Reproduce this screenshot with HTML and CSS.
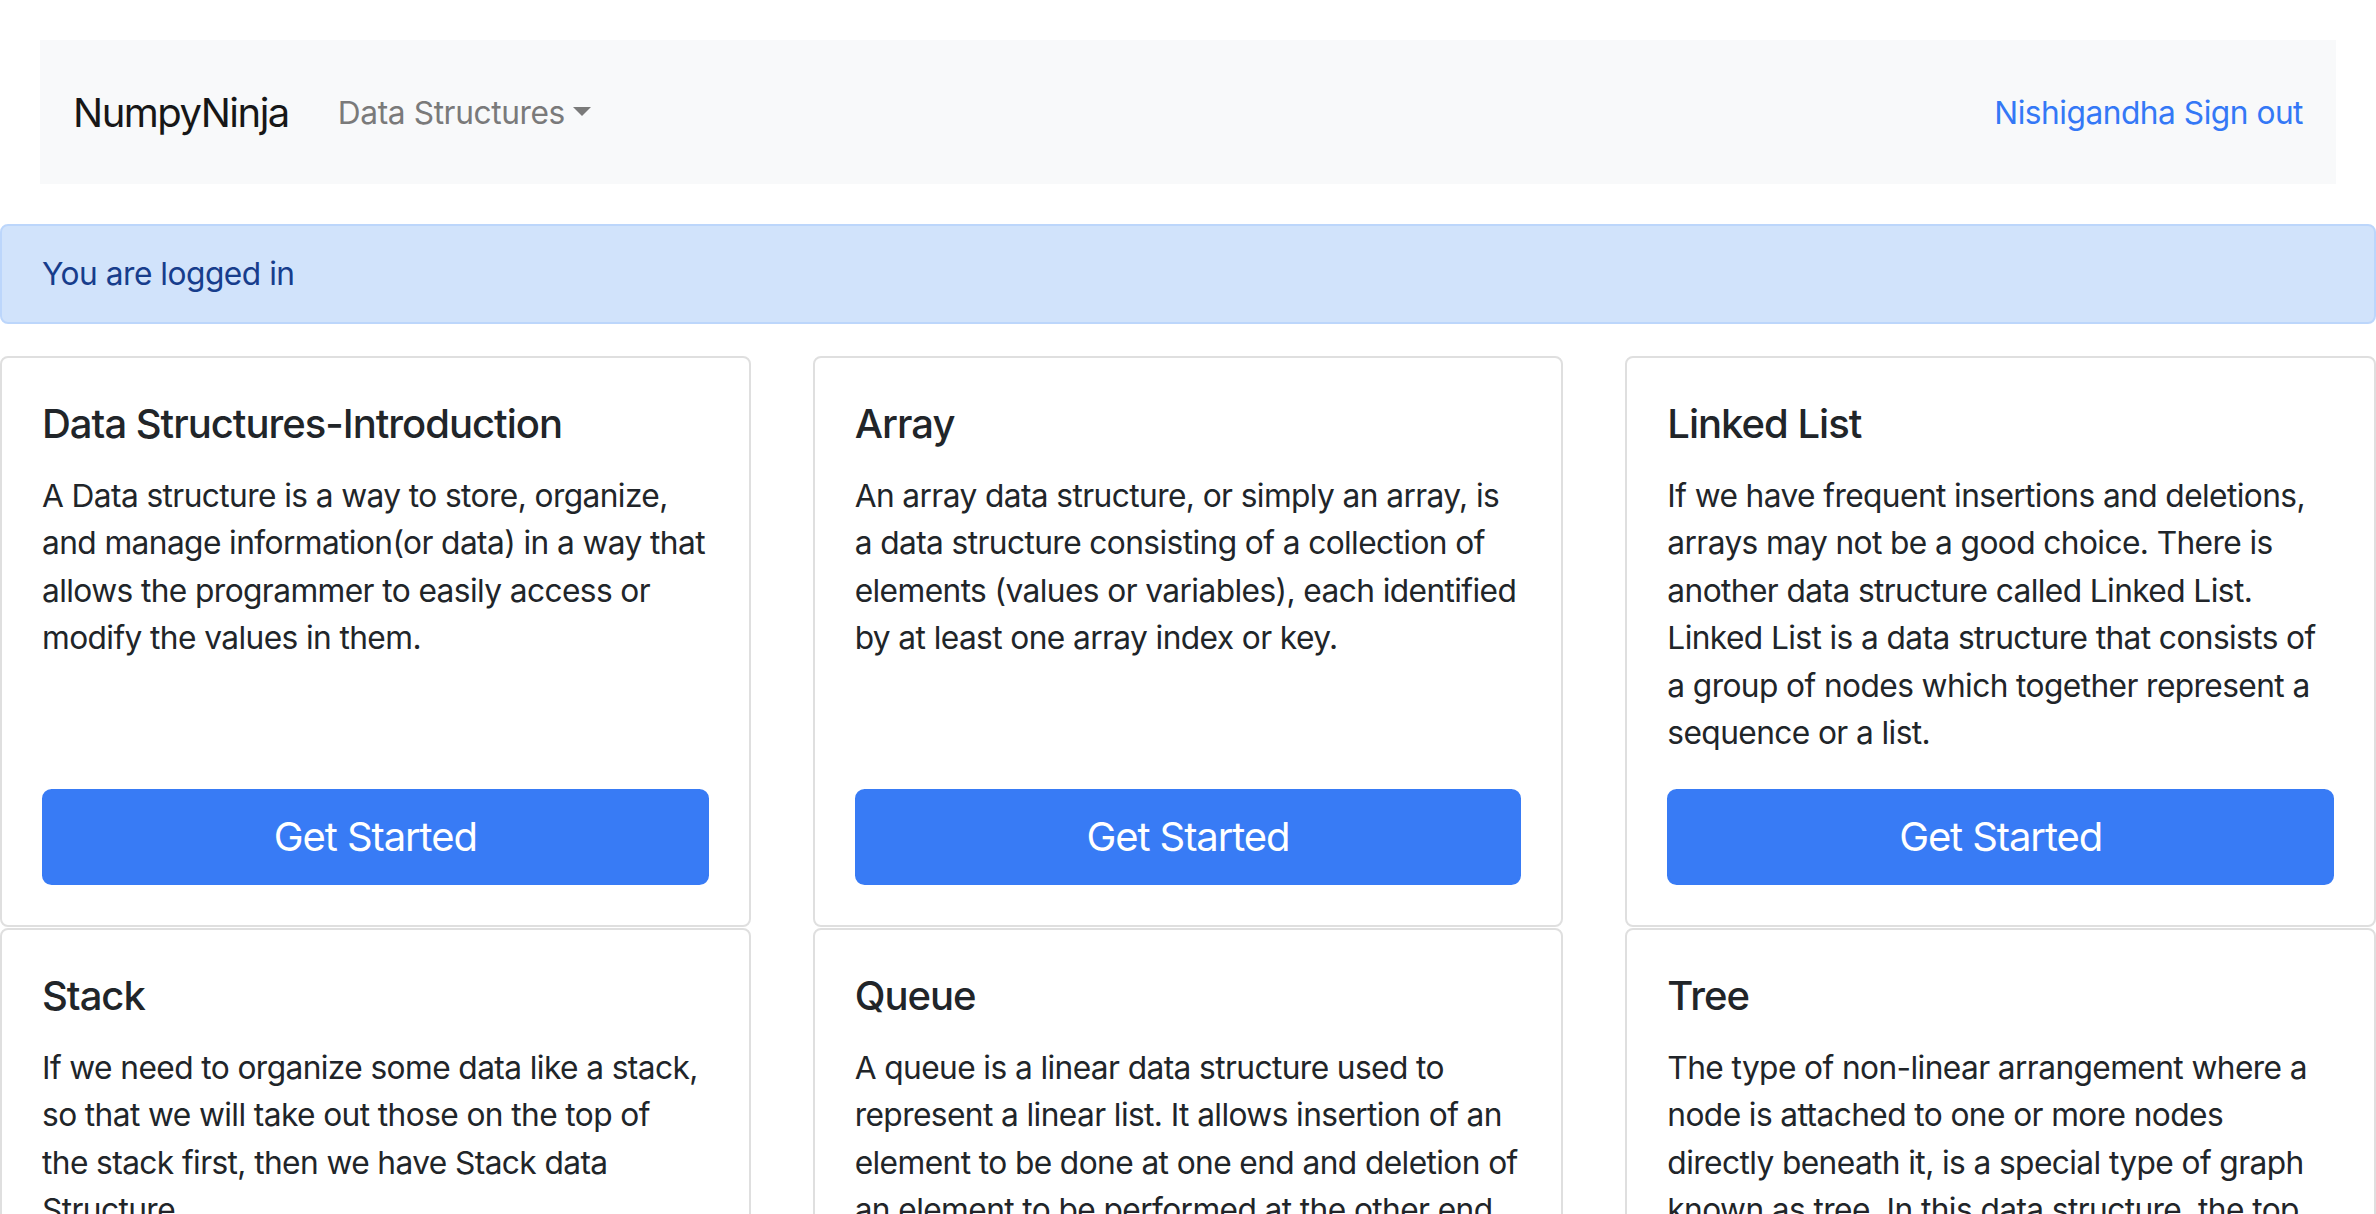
FILE: index.html
```html
<!DOCTYPE html>
<html lang="en">
<head>
<meta charset="utf-8">
<title>NumpyNinja</title>
<link rel="stylesheet" href="styles.css">
</head>
<body>
<nav class="navbar">
  <a class="brand" href="#">NumpyNinja</a>
  <div class="nav-menu">
    <a class="nav-link dropdown-toggle" href="#">Data Structures</a>
  </div>
  <div class="nav-right">
    <a class="nav-user" href="#">Nishigandha</a> <a class="nav-user" href="#">Sign out</a>
  </div>
</nav>

<div class="alert">You are logged in</div>

<div class="cards">
  <div class="card">
    <h5 class="card-title">Data Structures-Introduction</h5>
    <p class="card-text">A Data structure is a way to store, organize, and manage information(or data) in a way that allows the programmer to easily access or modify the values in them.</p>
    <a class="btn" href="#">Get Started</a>
  </div>
  <div class="card">
    <h5 class="card-title">Array</h5>
    <p class="card-text">An array data structure, or simply an array, is a data structure consisting of a collection of elements (values or variables), each identified by at least one array index or key.</p>
    <a class="btn" href="#">Get Started</a>
  </div>
  <div class="card">
    <h5 class="card-title">Linked List</h5>
    <p class="card-text">If we have frequent insertions and deletions, arrays may not be a good choice. There is another data structure called Linked List. Linked List is a data structure that consists of a group of nodes which together represent a sequence or a list.</p>
    <a class="btn" href="#">Get Started</a>
  </div>
  <div class="card">
    <h5 class="card-title">Stack</h5>
    <p class="card-text">If we need to organize some data like a stack, so that we will take out those on the top of the&nbsp;stack first, then we have Stack data Structure.</p>
    <a class="btn" href="#">Get Started</a>
  </div>
  <div class="card">
    <h5 class="card-title">Queue</h5>
    <p class="card-text">A queue is a linear data structure used to represent a linear list. It allows insertion of an element to be done at one end and deletion of an element to be performed at the other end.</p>
    <a class="btn" href="#">Get Started</a>
  </div>
  <div class="card">
    <h5 class="card-title">Tree</h5>
    <p class="card-text">The type of non-linear arrangement where a node is attached to one or more nodes directly beneath it, is a special type of graph known as tree. In this data structure, the top node is called the root node.</p>
    <a class="btn" href="#">Get Started</a>
  </div>
</div>
</body>
</html>
```

FILE: styles.css
```css
html, body {
  margin: 0;
  padding: 0;
}
body {
  font-family: Inter, "Liberation Sans", sans-serif;
  font-size: 31.7px;
  line-height: 1.5;
  letter-spacing: -0.6px;
  color: #212529;
  background: #ffffff;
  overflow: hidden;
}
a {
  text-decoration: none;
}

/* navbar */
.navbar {
  display: flex;
  align-items: center;
  margin: 40px 40px 0 40px;
  height: 144px;
  box-sizing: border-box;
  padding: 1px 33px 0 33px;
  background: #f8f9fa;
}
.brand {
  font-size: 40px;
  line-height: 60px;
  letter-spacing: -1.5px;
  color: #171717;
  margin-right: 33px;
}
.nav-link {
  display: inline-block;
  padding: 0 16px;
  letter-spacing: -0.4px;
  color: #7a7a7a;
}
.dropdown-toggle::after {
  content: "";
  display: inline-block;
  margin-left: 8px;
  vertical-align: 8px;
  border-top: 9.5px solid #7a7a7a;
  border-left: 9.5px solid transparent;
  border-right: 9.5px solid transparent;
}
.nav-right {
  margin-left: auto;
  letter-spacing: -0.5px;
}
.nav-user {
  color: #3478f6;
}

/* alert */
.alert {
  margin: 40px 0 32px 0;
  padding: 24px 40px;
  border: 2px solid #bcd6fb;
  border-radius: 8px;
  background: #d1e3fb;
  color: #173d8c;
  letter-spacing: -0.5px;
}

/* cards */
.cards {
  display: grid;
  grid-template-columns: repeat(3, 1fr);
  column-gap: 62px;
  row-gap: 1px;
}
.card {
  display: flex;
  flex-direction: column;
  border: 2px solid #dfdfdf;
  border-radius: 8px;
  padding: 42px 40px 40px 40px;
}
.card-title {
  margin: 0 0 24px 0;
  font-size: 40px;
  line-height: 1.2;
  font-weight: 500;
  letter-spacing: -1px;
  color: #212529;
}
.card-text {
  margin: 0 0 32px 0;
}
.btn {
  margin-top: auto;
  display: block;
  text-align: center;
  font-size: 40px;
  line-height: 60px;
  letter-spacing: -1.1px;
  padding: 16px 32px;
  border: 2px solid #387bf5;
  border-radius: 9.6px;
  background: #387bf5;
  color: #ffffff;
}
```
